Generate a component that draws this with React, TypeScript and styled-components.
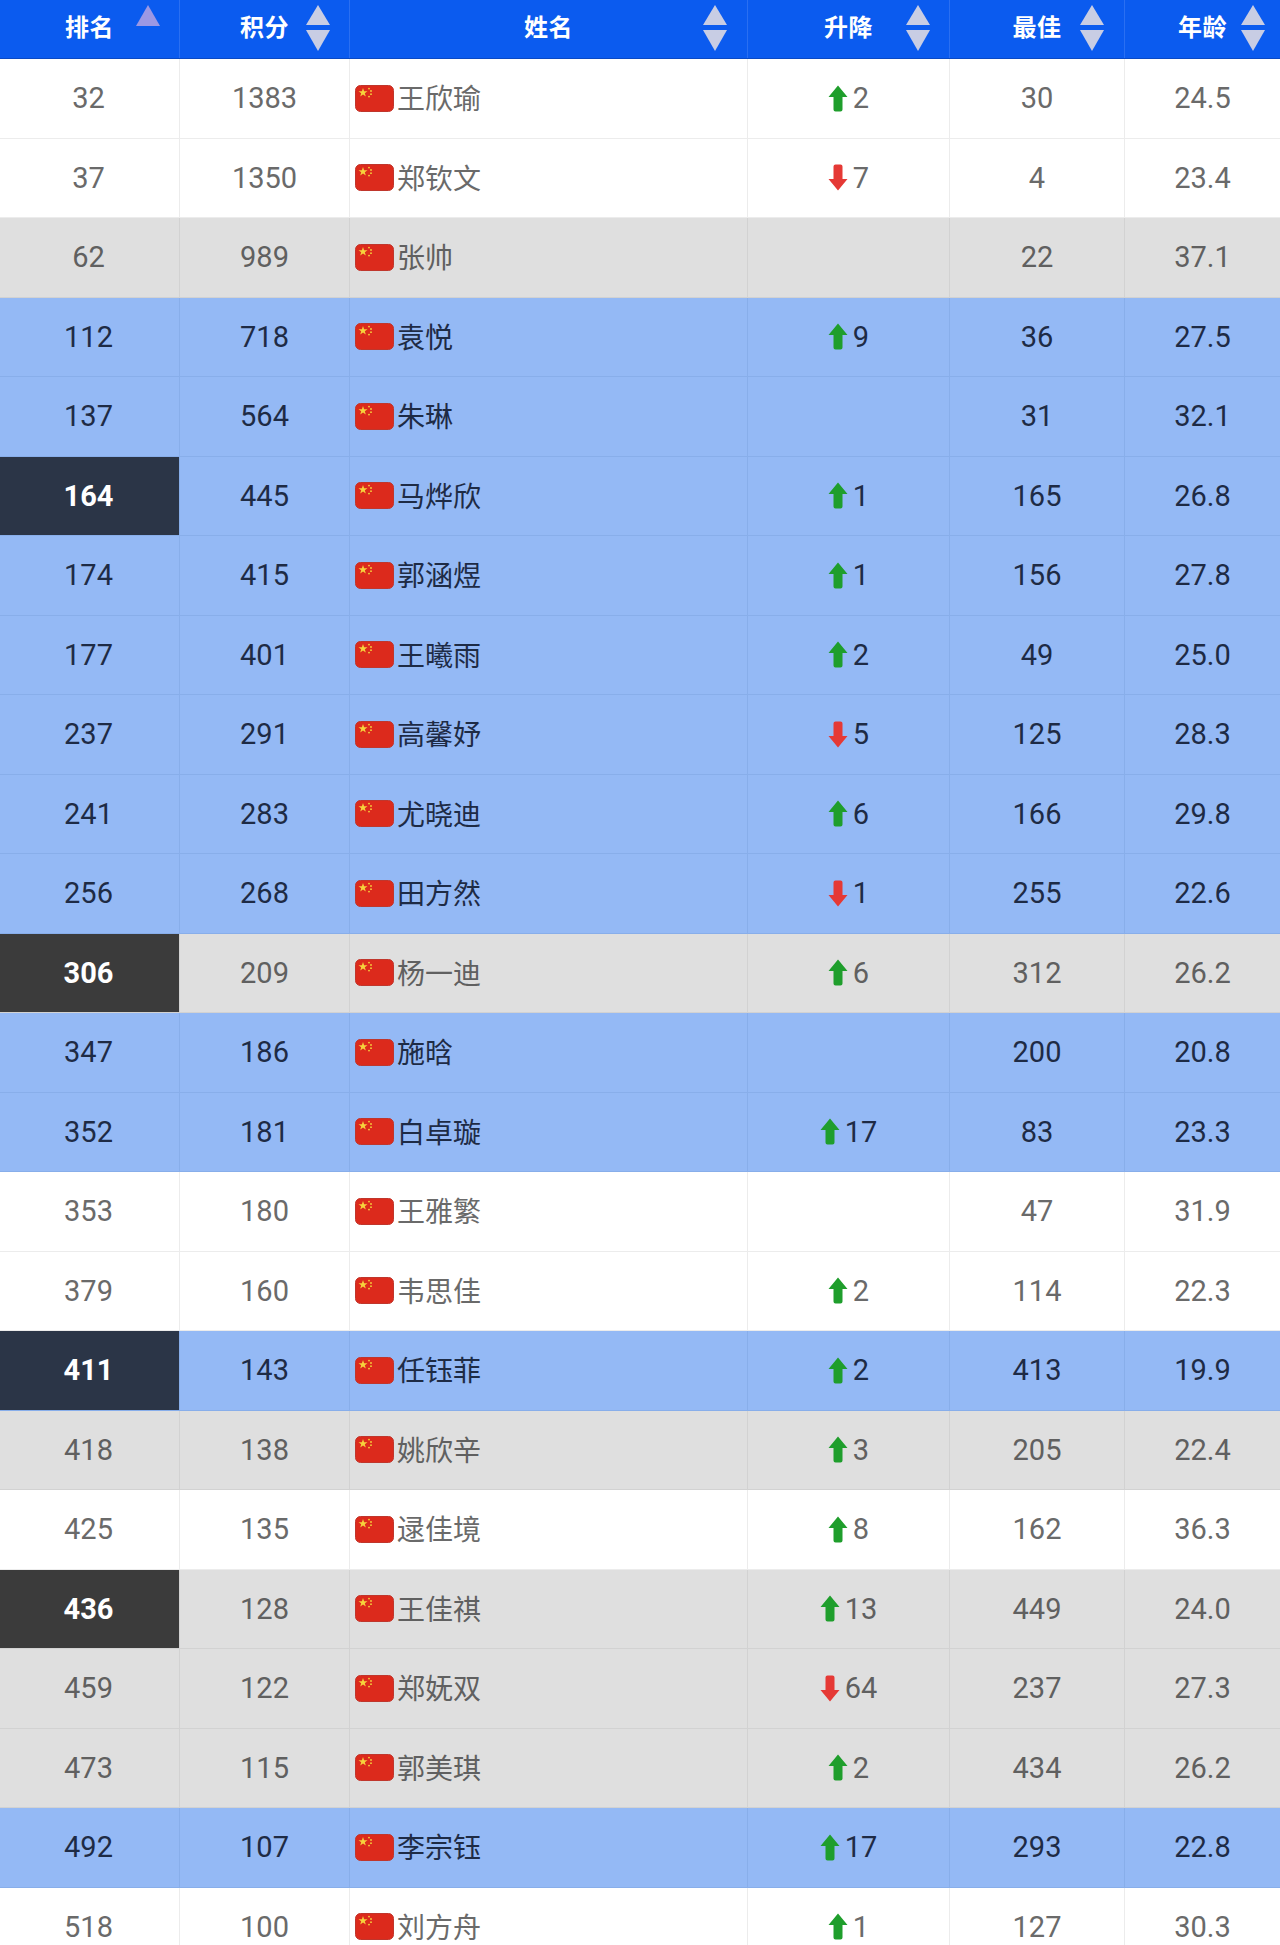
import React from "react";
import styled, { createGlobalStyle } from "styled-components";

const GlobalStyle = createGlobalStyle`
  html, body { margin: 0; padding: 0; background: #ffffff; }
  body { font-family: Roboto, "Noto Sans CJK SC", "Noto Sans", sans-serif; }
  * { box-sizing: border-box; }
`;

type Tone = "white" | "gray" | "blue";

interface RowData {
  rank: number;
  pts: number;
  name: string;
  ch: number;
  best: number;
  age: string;
  tone: Tone;
  mark?: boolean;
}

const rows: RowData[] = [
  { rank: 32, pts: 1383, name: "王欣瑜", ch: 2, best: 30, age: "24.5", tone: "white" },
  { rank: 37, pts: 1350, name: "郑钦文", ch: -7, best: 4, age: "23.4", tone: "white" },
  { rank: 62, pts: 989, name: "张帅", ch: 0, best: 22, age: "37.1", tone: "gray" },
  { rank: 112, pts: 718, name: "袁悦", ch: 9, best: 36, age: "27.5", tone: "blue" },
  { rank: 137, pts: 564, name: "朱琳", ch: 0, best: 31, age: "32.1", tone: "blue" },
  { rank: 164, pts: 445, name: "马烨欣", ch: 1, best: 165, age: "26.8", tone: "blue", mark: true },
  { rank: 174, pts: 415, name: "郭涵煜", ch: 1, best: 156, age: "27.8", tone: "blue" },
  { rank: 177, pts: 401, name: "王曦雨", ch: 2, best: 49, age: "25.0", tone: "blue" },
  { rank: 237, pts: 291, name: "高馨妤", ch: -5, best: 125, age: "28.3", tone: "blue" },
  { rank: 241, pts: 283, name: "尤晓迪", ch: 6, best: 166, age: "29.8", tone: "blue" },
  { rank: 256, pts: 268, name: "田方然", ch: -1, best: 255, age: "22.6", tone: "blue" },
  { rank: 306, pts: 209, name: "杨一迪", ch: 6, best: 312, age: "26.2", tone: "gray", mark: true },
  { rank: 347, pts: 186, name: "施晗", ch: 0, best: 200, age: "20.8", tone: "blue" },
  { rank: 352, pts: 181, name: "白卓璇", ch: 17, best: 83, age: "23.3", tone: "blue" },
  { rank: 353, pts: 180, name: "王雅繁", ch: 0, best: 47, age: "31.9", tone: "white" },
  { rank: 379, pts: 160, name: "韦思佳", ch: 2, best: 114, age: "22.3", tone: "white" },
  { rank: 411, pts: 143, name: "任钰菲", ch: 2, best: 413, age: "19.9", tone: "blue", mark: true },
  { rank: 418, pts: 138, name: "姚欣辛", ch: 3, best: 205, age: "22.4", tone: "gray" },
  { rank: 425, pts: 135, name: "逯佳境", ch: 8, best: 162, age: "36.3", tone: "white" },
  { rank: 436, pts: 128, name: "王佳祺", ch: 13, best: 449, age: "24.0", tone: "gray", mark: true },
  { rank: 459, pts: 122, name: "郑妩双", ch: -64, best: 237, age: "27.3", tone: "gray" },
  { rank: 473, pts: 115, name: "郭美琪", ch: 2, best: 434, age: "26.2", tone: "gray" },
  { rank: 492, pts: 107, name: "李宗钰", ch: 17, best: 293, age: "22.8", tone: "blue" },
  { rank: 518, pts: 100, name: "刘方舟", ch: 1, best: 127, age: "30.3", tone: "white" },
];

const COLS = "180px 170px 398px 202px 175px 155px";

const toneBg: Record<Tone, string> = {
  white: "#ffffff",
  gray: "#dfdfdf",
  blue: "#94b9f5",
};
const toneText: Record<Tone, string> = {
  white: "#6a6a6a",
  gray: "#606060",
  blue: "#1e2b45",
};
const toneLine: Record<Tone, string> = {
  white: "#ececec",
  gray: "#d2d2d2",
  blue: "#88aeea",
};
const markBg: Record<Tone, string> = {
  white: "#3a3a3a",
  gray: "#3b3b3b",
  blue: "#2b3547",
};

const Table = styled.div`
  width: 1280px;
  display: flex;
  flex-direction: column;
`;

const HeaderRow = styled.div`
  display: grid;
  grid-template-columns: ${COLS};
  height: 59px;
  background: #0b5bef;
  border-bottom: 1px solid #0a49c4;
`;

const HeaderCell = styled.div<{ $last?: boolean }>`
  display: grid;
  grid-template-columns: 1fr auto 1fr;
  align-items: center;
  padding-bottom: 6px;
  border-right: ${(p) => (p.$last ? "none" : "1px solid #2a6ff2")};
`;

const HeaderLabel = styled.span`
  grid-column: 2;
  font-family: "Noto Sans CJK SC", sans-serif;
  font-weight: 700;
  font-size: 24px;
  color: #ffffff;
  letter-spacing: 0.5px;
  line-height: 1;
`;

const SortIcon = styled.svg<{ $right: number }>`
  grid-column: 3;
  justify-self: end;
  margin-right: ${(p) => p.$right}px;
  width: 26px;
  height: 48px;
  margin-top: 4px;
`;

const Row = styled.div<{ $tone: Tone }>`
  display: grid;
  grid-template-columns: ${COLS};
  height: 79.5px;
  background: ${(p) => toneBg[p.$tone]};
  color: ${(p) => toneText[p.$tone]};
  border-bottom: 1px solid ${(p) => toneLine[p.$tone]};
`;

const Cell = styled.div<{ $tone: Tone; $last?: boolean }>`
  display: flex;
  align-items: center;
  justify-content: center;
  font-family: Roboto, "Noto Sans CJK SC", sans-serif;
  font-size: 29px;
  font-weight: 400;
  border-right: ${(p) => (p.$last ? "none" : `1px solid ${toneLine[p.$tone]}`)};
`;

const RankCell = styled(Cell)<{ $mark?: boolean }>`
  background: ${(p) => (p.$mark ? markBg[p.$tone] : "transparent")};
  color: ${(p) => (p.$mark ? "#ffffff" : "inherit")};
  font-weight: ${(p) => (p.$mark ? 700 : 400)};
  padding-right: 2px;
`;

const NameCell = styled(Cell)`
  justify-content: flex-start;
  padding-left: 5px;
  gap: 3px;
`;

const NameText = styled.span`
  font-family: "Noto Sans CJK SC", sans-serif;
  font-size: 28px;
  line-height: 1;
  margin-top: -2px;
`;

const ChangeWrap = styled.div`
  display: flex;
  align-items: center;
  gap: 5px;
`;

const Arrow = styled.svg<{ $down?: boolean }>`
  width: 20px;
  height: 27px;
  transform: ${(p) => (p.$down ? "rotate(180deg)" : "none")};
`;

const Flag: React.FC = () => (
  <svg width="39" height="27" viewBox="0 0 39 27">
    <rect x="0.5" y="0.5" width="38" height="26" rx="5" fill="#dc2a1c" stroke="#c0362c" />
    <polygon
      points="8,3 9.1,6.3 12.5,6.3 9.8,8.3 10.8,11.6 8,9.6 5.2,11.6 6.2,8.3 3.5,6.3 6.9,6.3"
      fill="#f6d23c"
    />
    <circle cx="14" cy="3.6" r="0.9" fill="#f6d23c" />
    <circle cx="16" cy="6" r="0.9" fill="#f6d23c" />
    <circle cx="16" cy="9.2" r="0.9" fill="#f6d23c" />
    <circle cx="14" cy="11.6" r="0.9" fill="#f6d23c" />
  </svg>
);

const Sort: React.FC<{ right: number; only?: boolean }> = ({ right, only }) => (
  <SortIcon $right={right} viewBox="0 0 26 48">
    {only ? (
      <path d="M13 1 L25 22 H1 Z" fill="#9c98e4" strokeLinejoin="round" />
    ) : (
      <>
        <path d="M13 1 L25 21 H1 Z" fill="#c8cde4" strokeLinejoin="round" />
        <path d="M1 26 H25 L13 47 Z" fill="#c8cde4" strokeLinejoin="round" />
      </>
    )}
  </SortIcon>
);

const ChangeArrow: React.FC<{ down?: boolean }> = ({ down }) => (
  <Arrow $down={down} viewBox="0 0 20 27">
    <path
      d="M10 0.5 L19.5 12 H14.5 V24.5 a2 2 0 0 1 -2 2 H7.5 a2 2 0 0 1 -2 -2 V12 H0.5 Z"
      fill={down ? "#e53935" : "#1f9e2c"}
    />
  </Arrow>
);

const headers = [
  { label: "排名", right: 18, only: true },
  { label: "积分", right: 18 },
  { label: "姓名", right: 19 },
  { label: "升降", right: 18 },
  { label: "最佳", right: 19 },
  { label: "年龄", right: 14 },
];

export default function App() {
  return (
    <>
      <GlobalStyle />
      <Table>
        <HeaderRow>
          {headers.map((h, i) => (
            <HeaderCell key={h.label} $last={i === headers.length - 1}>
              <HeaderLabel>{h.label}</HeaderLabel>
              <Sort right={h.right} only={h.only} />
            </HeaderCell>
          ))}
        </HeaderRow>
        {rows.map((r) => (
          <Row key={r.rank} $tone={r.tone}>
            <RankCell $tone={r.tone} $mark={r.mark}>
              {r.rank}
            </RankCell>
            <Cell $tone={r.tone}>{r.pts}</Cell>
            <NameCell $tone={r.tone}>
              <Flag />
              <NameText>{r.name}</NameText>
            </NameCell>
            <Cell $tone={r.tone}>
              {r.ch !== 0 && (
                <ChangeWrap>
                  <ChangeArrow down={r.ch < 0} />
                  <span>{Math.abs(r.ch)}</span>
                </ChangeWrap>
              )}
            </Cell>
            <Cell $tone={r.tone}>{r.best}</Cell>
            <Cell $tone={r.tone} $last>
              {r.age}
            </Cell>
          </Row>
        ))}
      </Table>
    </>
  );
}
